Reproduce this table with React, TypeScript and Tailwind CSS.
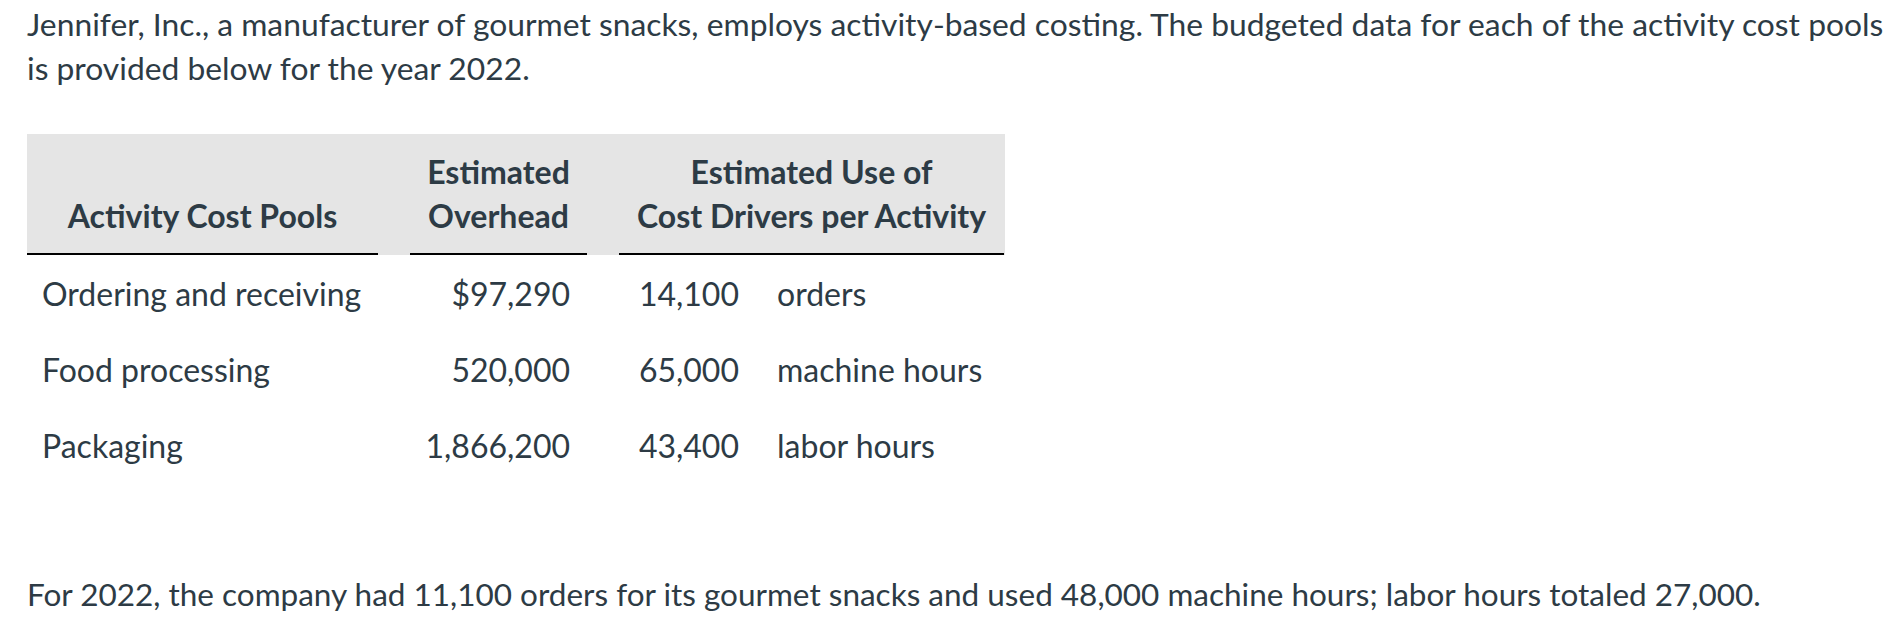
import React from "react";

const rows = [
  { pool: "Ordering and receiving", overhead: "$97,290", qty: "14,100", unit: "orders" },
  { pool: "Food processing", overhead: "520,000", qty: "65,000", unit: "machine hours" },
  { pool: "Packaging", overhead: "1,866,200", qty: "43,400", unit: "labor hours" },
];

export default function App() {
  return (
    <div
      className="bg-white w-[1904px] h-[644px] pl-[27px] text-[#2d3b45] text-[32px] leading-[44px]"
      style={{ fontFamily: "Lato, 'Noto Sans', sans-serif" }}
    >
      <p className="pt-[2px] text-[31.8px] w-[1877px]">
        Jennifer, Inc., a manufacturer of gourmet snacks, employs activity-based costing. The budgeted data for each of the activity cost pools is provided below for the year 2022.
      </p>

      <div className="mt-[44px] w-[978px]">
        <div className="grid grid-cols-[351px_177px_385px] gap-x-[32px] bg-[#e5e5e5] pt-[16px] font-bold leading-[44px]">
          <div className="flex items-end justify-center border-b-2 border-black pb-[15px]">
            Activity Cost Pools
          </div>
          <div className="flex flex-col items-center border-b-2 border-black pb-[15px]">
            <span>Estimated</span>
            <span>Overhead</span>
          </div>
          <div className="flex flex-col items-center border-b-2 border-black pb-[15px]">
            <span>Estimated Use of</span>
            <span>Cost Drivers per Activity</span>
          </div>
        </div>
        {rows.map((r) => (
          <div key={r.pool} className="grid grid-cols-[351px_177px_385px] gap-x-[32px] h-[76px] items-center pt-[1px]">
            <div className="pl-[15px]">{r.pool}</div>
            <div className="text-right pr-[17px]">{r.overhead}</div>
            <div className="flex">
              <span className="w-[120px] text-right">{r.qty}</span>
              <span className="pl-[38px]">{r.unit}</span>
            </div>
          </div>
        ))}
      </div>

      <p className="mt-[89px] text-[31.5px]">
        For 2022, the company had 11,100 orders for its gourmet snacks and used 48,000 machine hours; labor hours totaled 27,000.
      </p>
    </div>
  );
}
